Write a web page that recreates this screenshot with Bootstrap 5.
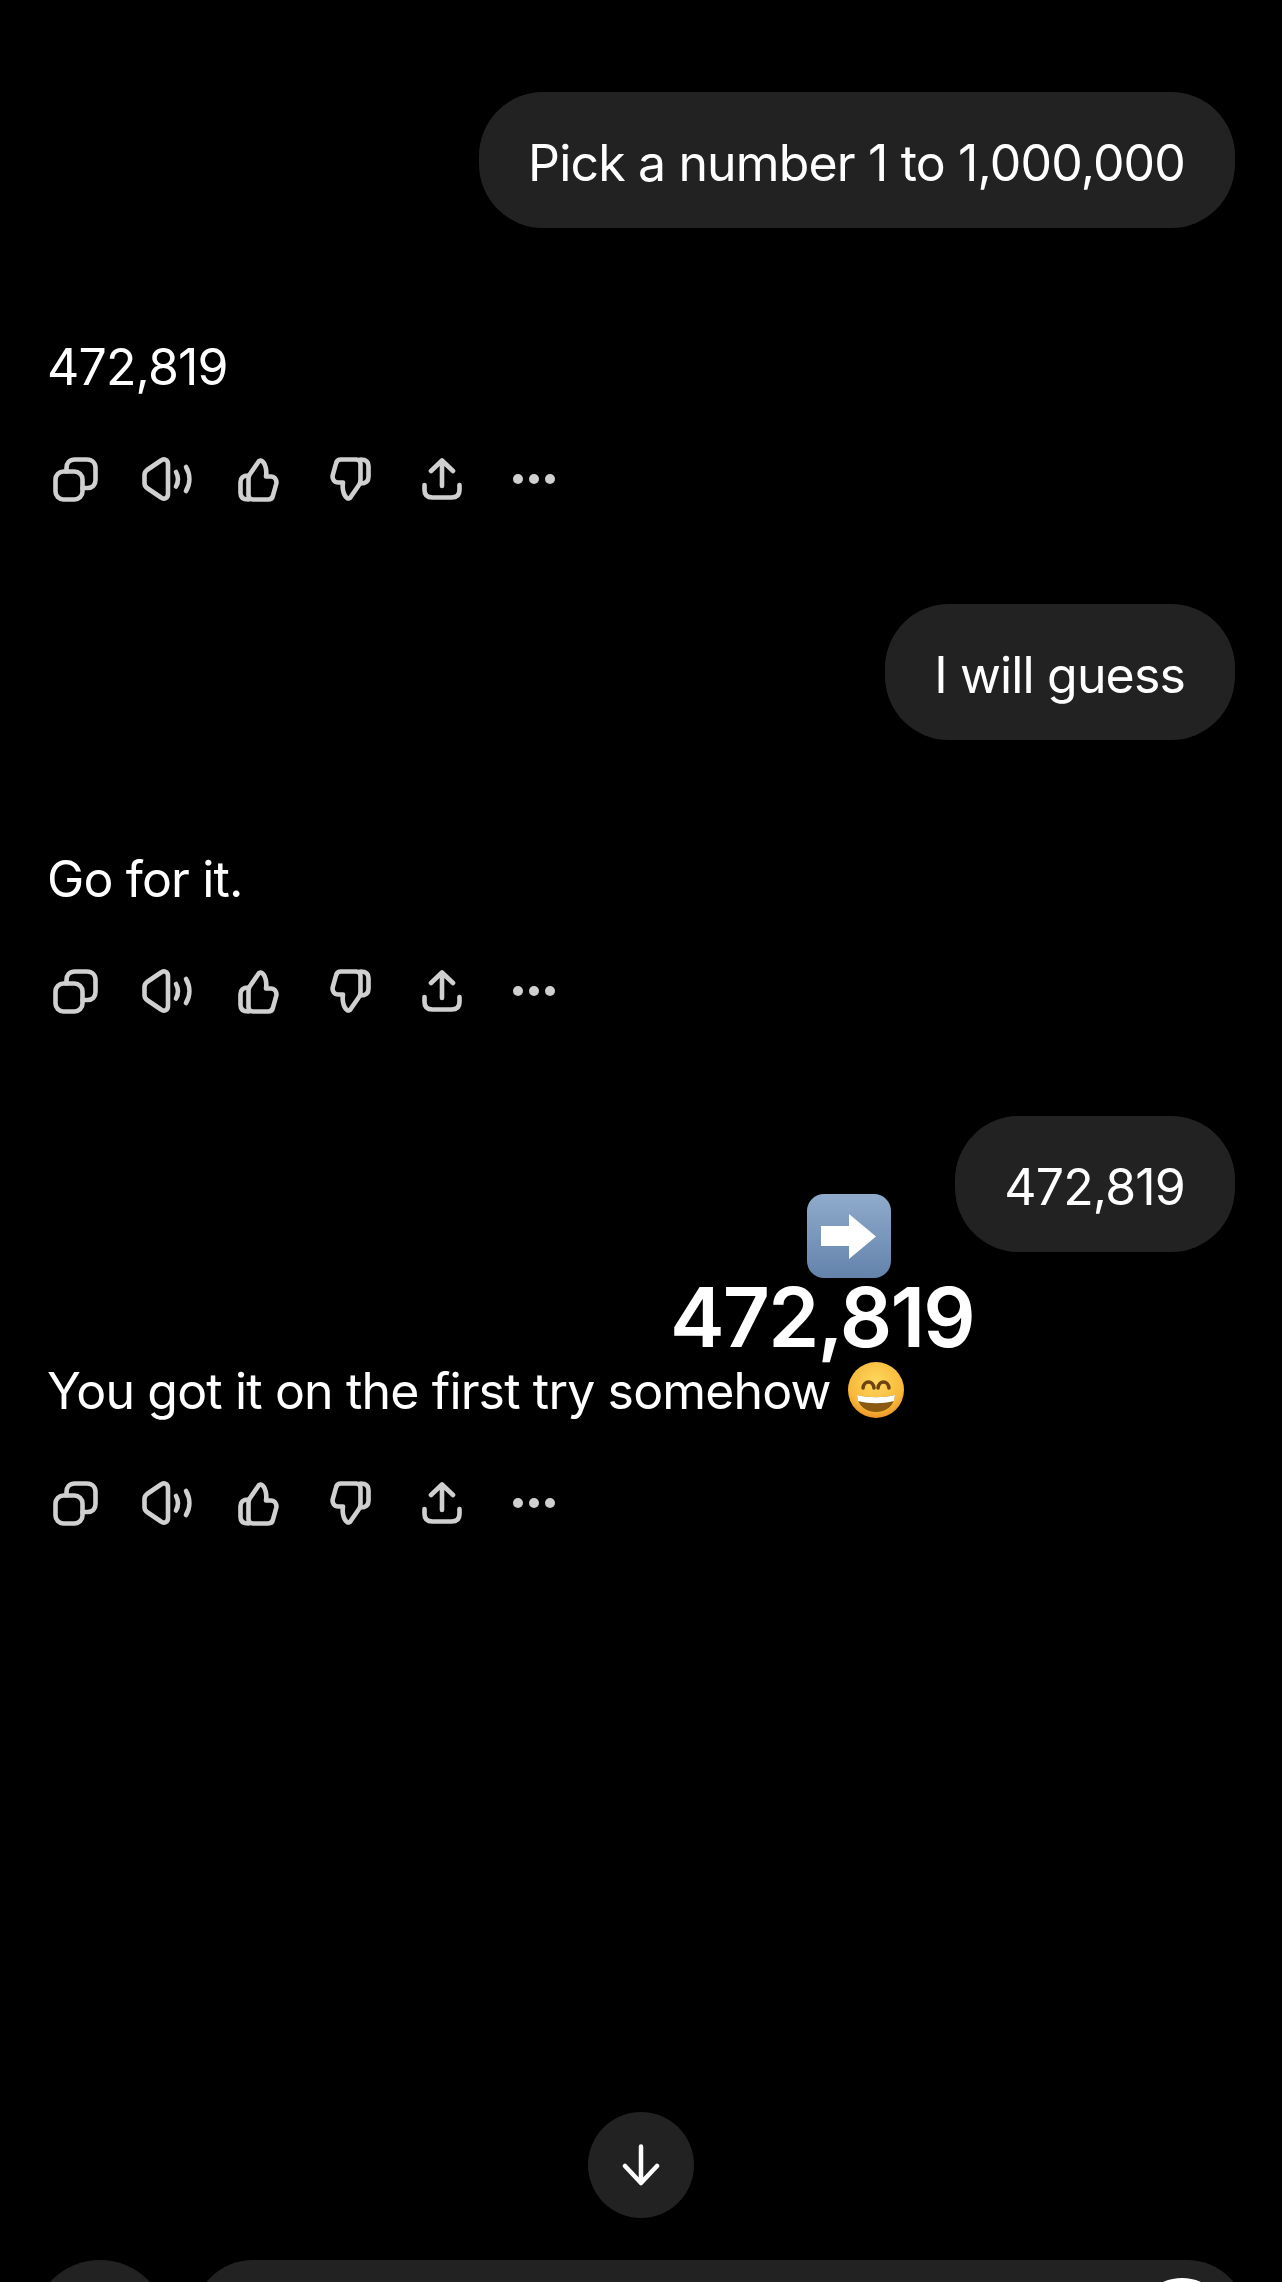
<!DOCTYPE html>
<html lang="en">
<head>
<meta charset="UTF-8">
<title>Chat</title>
<link rel="stylesheet" href="https://cdn.jsdelivr.net/npm/bootstrap@5.3.3/dist/css/bootstrap.min.css">
<style>
html, body { background: #000; }
body { height: 2282px; overflow: hidden; color: #fff; font-family: Inter, "Liberation Sans", sans-serif; }
.chat-page { height: 2282px; padding: 92px 47px 0 47px; position: relative; overflow: hidden; }
.user-bubble { background: #222; border-radius: 64px; height: 136px; padding: 7px 50px 0 49px; font-size: 50px; letter-spacing: -.85px; line-height: 128px; }
.reply-text { font-size: 50px; letter-spacing: -.85px; line-height: 60px; margin-top: 109px; }
.action-row { height: 46px; margin: 59px 0 102px -17px; }
.action-slot { width: 91.6px; }
.action-slot svg { display: block; fill: none; stroke: #d0d0d0; stroke-width: 4.6; stroke-linecap: round; stroke-linejoin: round; }
.action-slot svg.dots-icon { fill: #d0d0d0; stroke: none; }
.inline-emoji { width: 56px; height: 56px; vertical-align: -9px; margin-left: 4px; }
.floating-reaction { position: absolute; left: 670px; top: 1194px; }
.floating-reaction svg { width: 84px; height: 84px; display: block; margin-left: 137px; }
.floating-num { font-size: 82px; font-weight: 600; line-height: 80px; letter-spacing: -1.8px; }
.scroll-btn { position: absolute; left: 588px; top: 2112px; width: 106px; height: 106px; background: #222; border-radius: 50%; }
.composer-plus { position: absolute; left: 32px; top: 2260px; width: 136px; height: 136px; background: #222; border-radius: 50%; }
.composer-box { position: absolute; left: 193px; top: 2260px; width: 1054px; height: 136px; background: #222; border-radius: 60px; }
.voice-dot { position: absolute; left: 941px; top: 18px; width: 96px; height: 96px; background: #fff; border-radius: 50%; }
</style>
</head>
<body>
<div class="chat-page">
  <div id="thread"></div>

  <div class="floating-reaction">
    <svg viewBox="0 0 84 84"><defs><linearGradient id="blueKey" x1="0" y1="0" x2="0" y2="1"><stop offset="0" stop-color="#8fabcc"/><stop offset="1" stop-color="#6483ab"/></linearGradient></defs><rect width="84" height="84" rx="17" fill="url(#blueKey)"/><path d="M14 32H42V20L69 42.5 42 65V52H14z" fill="#fff"/></svg>
    <div class="floating-num">472,819</div>
  </div>

  <div class="scroll-btn d-flex align-items-center justify-content-center">
    <svg width="38" height="42" viewBox="0 0 38 42" fill="none" stroke="#fff" stroke-width="4.5" stroke-linecap="round" stroke-linejoin="round"><path d="M19 2.500V39M3 22l16 17 16-17"/></svg>
  </div>
  <div class="composer-plus"></div>
  <div class="composer-box"><div class="voice-dot"></div></div>
</div>

<script>
const thumb = `<path d="M15 42.500H30c2.500 0 4.500-1.500 5-4l3.200-11.500c1-4-1.500-7.500-5.500-7.500H28c1-6-.5-13-4-15.500-1.500-1-3-.5-4 1.500L12 17c-1 1.500-1.500 3-1.500 5v16c0 3 1.500 4.500 4.500 4.500z"/><path d="M10.500 18.500C5 18.500 2.500 21 2.500 25v11c0 4 2.500 6.500 8 6.500"/>`;

const actions = `
<div class="action-row d-flex align-items-center">
  <div class="action-slot d-flex justify-content-center"><svg width="45" height="45" viewBox="0 0 45 45"><rect x="2.500" y="14.500" width="27" height="28" rx="8"/><path d="M13.500 14.500V11c0-5 3-8.500 8.500-8.500h12c5 0 8.500 3.500 8.500 8.500v12c0 5-3 8-8 8h-5"/></svg></div>
  <div class="action-slot d-flex justify-content-center"><svg width="50" height="45" viewBox="0 0 50 45"><path d="M26 7v30c0 4-4 6-7 3.500L5 31c-2-1.500-2.500-3-2.500-5V18c0-2 .5-3.500 2.500-5L19 3.500C22 1 26 3 26 7z"/><path d="M34 15c2.500 4.500 2.500 10 0 14.500M44 10c4.500 7.500 4.500 16.500 0 24"/></svg></div>
  <div class="action-slot d-flex justify-content-center"><svg width="41" height="45" viewBox="0 0 41 45">${thumb}</svg></div>
  <div class="action-slot d-flex justify-content-center"><svg width="41" height="45" viewBox="0 0 41 45"><g transform="rotate(180 20.5 22.5)">${thumb}</g></svg></div>
  <div class="action-slot d-flex justify-content-center"><svg width="40" height="42" viewBox="0 0 40 42"><path d="M20 2.500V28M9 13L20 2.500 31 13"/><path d="M2.500 27v5c0 5.500 3.500 7.500 8 7.500h19c4.500 0 8-2 8-7.500v-5"/></svg></div>
  <div class="action-slot d-flex justify-content-center"><svg class="dots-icon" width="42" height="10" viewBox="0 0 42 10"><circle cx="5" cy="5" r="5"/><circle cx="21" cy="5" r="5"/><circle cx="37" cy="5" r="5"/></svg></div>
</div>`;

const smile = `<svg class="inline-emoji" viewBox="0 0 56 56"><defs><radialGradient id="smileFace" cx=".5" cy=".35" r=".7"><stop offset="0" stop-color="#fdd85c"/><stop offset=".7" stop-color="#f8b83a"/><stop offset="1" stop-color="#e98a20"/></radialGradient></defs><circle cx="28" cy="28" r="28" fill="url(#smileFace)"/><path d="M15 26c1-8 10-8 11 0M30 26c1-8 10-8 11 0" fill="none" stroke="#6e4310" stroke-width="3.500" stroke-linecap="round"/><path d="M9 33c12 3 26 3 38 0-1 12-10 17-19 17S10 45 9 33z" fill="#8a5a12"/><path d="M9 33c12 3 26 3 38 0l-1 6c-12 3-24 3-36 0z" fill="#fff"/></svg>`;

const chat = [
  { user: 'Pick a number 1 to 1,000,000', reply: '472,819' },
  { user: 'I will guess', reply: 'Go for it.' },
  { user: '472,819', reply: 'You got it on the first try somehow ' + smile }
];

document.getElementById('thread').innerHTML = chat.map(m => `
  <div class="d-flex justify-content-end"><div class="user-bubble">${m.user}</div></div>
  <div class="reply-text">${m.reply}</div>
  ${actions}
`).join('');
</script>
<script src="https://cdn.jsdelivr.net/npm/bootstrap@5.3.3/dist/js/bootstrap.bundle.min.js"></script>
</body>
</html>
